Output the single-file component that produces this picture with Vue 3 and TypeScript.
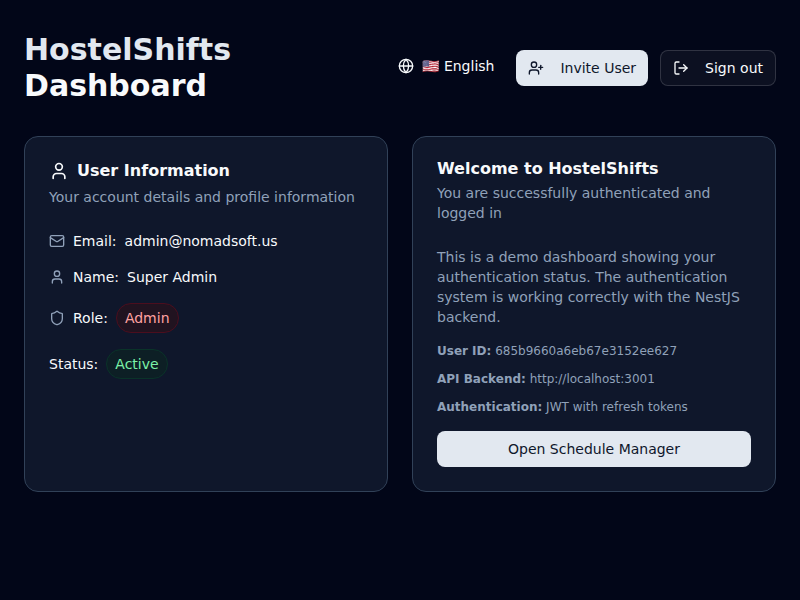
<script setup lang="ts">
interface Detail {
  label: string
  value: string
}

const details: Detail[] = [
  { label: 'User ID:', value: '685b9660a6eb67e3152ee627' },
  { label: 'API Backend:', value: 'http://localhost:3001' },
  { label: 'Authentication:', value: 'JWT with refresh tokens' },
]
</script>

<template>
  <main class="page">
    <header class="header">
      <h1 class="title"><span class="brand">HostelShifts</span> Dashboard</h1>
      <div class="actions">
        <div class="language">
          <svg class="icon" viewBox="0 0 24 24">
            <circle cx="12" cy="12" r="10" />
            <path d="M12 2a14.5 14.5 0 0 0 0 20 14.5 14.5 0 0 0 0-20" />
            <path d="M2 12h20" />
          </svg>
          <span>🇺🇸 English</span>
        </div>
        <button class="btn primary">
          <svg class="icon" viewBox="0 0 24 24">
            <path d="M16 21v-2a4 4 0 0 0-4-4H6a4 4 0 0 0-4 4v2" />
            <circle cx="9" cy="7" r="4" />
            <path d="M19 8v6" />
            <path d="M22 11h-6" />
          </svg>
          Invite User
        </button>
        <button class="btn outline">
          <svg class="icon" viewBox="0 0 24 24">
            <path d="M9 21H5a2 2 0 0 1-2-2V5a2 2 0 0 1 2-2h4" />
            <path d="m16 17 5-5-5-5" />
            <path d="M21 12H9" />
          </svg>
          Sign out
        </button>
      </div>
    </header>

    <div class="cards">
      <section class="card">
        <div class="card-header">
          <h2 class="card-title with-icon">
            <svg class="icon large" viewBox="0 0 24 24">
              <path d="M19 21v-2a4 4 0 0 0-4-4H9a4 4 0 0 0-4 4v2" />
              <circle cx="12" cy="7" r="4" />
            </svg>
            User Information
          </h2>
          <p class="muted">Your account details and profile information</p>
        </div>
        <div class="rows">
          <div class="row">
            <svg class="icon dim" viewBox="0 0 24 24">
              <path d="m22 7-8.991 5.727a2 2 0 0 1-2.009 0L2 7" />
              <rect x="2" y="4" width="20" height="16" rx="2" />
            </svg>
            <span>Email:</span>
            <span>admin@nomadsoft.us</span>
          </div>
          <div class="row">
            <svg class="icon dim" viewBox="0 0 24 24">
              <path d="M19 21v-2a4 4 0 0 0-4-4H9a4 4 0 0 0-4 4v2" />
              <circle cx="12" cy="7" r="4" />
            </svg>
            <span>Name:</span>
            <span>Super Admin</span>
          </div>
          <div class="row">
            <svg class="icon dim" viewBox="0 0 24 24">
              <path d="M20 13c0 5-3.5 7.5-7.66 8.95a1 1 0 0 1-.67-.01C7.5 20.5 4 18 4 13V6a1 1 0 0 1 1-1c2 0 4.5-1.2 6.24-2.72a1.17 1.17 0 0 1 1.52 0C14.51 3.81 17 5 19 5a1 1 0 0 1 1 1z" />
            </svg>
            <span>Role:</span>
            <span class="badge red">Admin</span>
          </div>
          <div class="row">
            <span>Status:</span>
            <span class="badge green">Active</span>
          </div>
        </div>
      </section>

      <section class="card">
        <div class="card-header">
          <h2 class="card-title">Welcome to HostelShifts</h2>
          <p class="muted">You are successfully authenticated and logged in</p>
        </div>
        <div class="rows">
          <p class="muted">
            This is a demo dashboard showing your authentication status. The
            authentication system is working correctly with the NestJS backend.
          </p>
          <div class="details">
            <p v-for="item in details" :key="item.label">
              <strong>{{ item.label }}</strong> {{ item.value }}
            </p>
          </div>
          <button class="btn primary">Open Schedule Manager</button>
        </div>
      </section>
    </div>
  </main>
</template>

<style>
body {
  background: #020618;
}
</style>

<style scoped>
* {
  box-sizing: border-box;
  margin: 0;
}
.page {
  min-height: 100vh;
  padding: 32px 24px;
  background: #020618;
  color: #f8fafc;
  font-family: 'DejaVu Sans', 'Noto Color Emoji', sans-serif;
  font-size: 14px;
  line-height: 20px;
}
.header {
  display: flex;
  align-items: center;
  justify-content: space-between;
  margin-bottom: 32px;
}
.title {
  width: 240px;
  font-size: 30px;
  line-height: 36px;
  font-weight: 700;
}
.brand {
  color: #e2e8f0;
}
.actions {
  display: flex;
  align-items: center;
  gap: 12px;
}
.language {
  display: flex;
  align-items: center;
  gap: 8px;
  padding: 0 10px 4px 0;
}
.icon {
  flex: none;
  width: 16px;
  height: 16px;
  fill: none;
  stroke: currentColor;
  stroke-width: 2;
  stroke-linecap: round;
  stroke-linejoin: round;
}
.icon.large {
  width: 20px;
  height: 20px;
}
.icon.dim {
  color: #90a1b9;
}
.btn {
  display: flex;
  align-items: center;
  justify-content: center;
  gap: 16px;
  height: 36px;
  padding: 0 12px;
  border: 0;
  border-radius: 8px;
  font: inherit;
  white-space: nowrap;
}
.primary {
  background: #e2e8f0;
  color: #0f172b;
}
.outline {
  border: 1px solid rgba(255, 255, 255, 0.15);
  background: rgba(255, 255, 255, 0.045);
  color: #f8fafc;
}
.cards {
  display: grid;
  grid-template-columns: 1fr 1fr;
  gap: 24px;
}
.card {
  display: flex;
  flex-direction: column;
  gap: 24px;
  padding: 24px;
  border: 1px solid #314158;
  border-radius: 14px;
  background: #0f172b;
}
.card-header {
  display: flex;
  flex-direction: column;
  gap: 6px;
}
.card-title {
  font-size: 16px;
  line-height: 16px;
  font-weight: 600;
}
.with-icon {
  display: flex;
  align-items: center;
  gap: 8px;
}
.muted {
  color: #90a1b9;
}
.rows {
  display: flex;
  flex-direction: column;
  gap: 16px;
}
.row {
  display: flex;
  align-items: center;
  gap: 8px;
}
.badge {
  padding: 4px 8px;
  border: 1px solid;
  border-radius: 15px;
}
.red {
  border-color: #4b0e1e;
  background: #211320;
  color: #ffa2a2;
}
.green {
  border-color: #0a3329;
  background: #0d1f25;
  color: #7bf1a8;
}
.details {
  display: flex;
  flex-direction: column;
  gap: 12px;
  color: #90a1b9;
  font-size: 12px;
  line-height: 16px;
}
</style>
